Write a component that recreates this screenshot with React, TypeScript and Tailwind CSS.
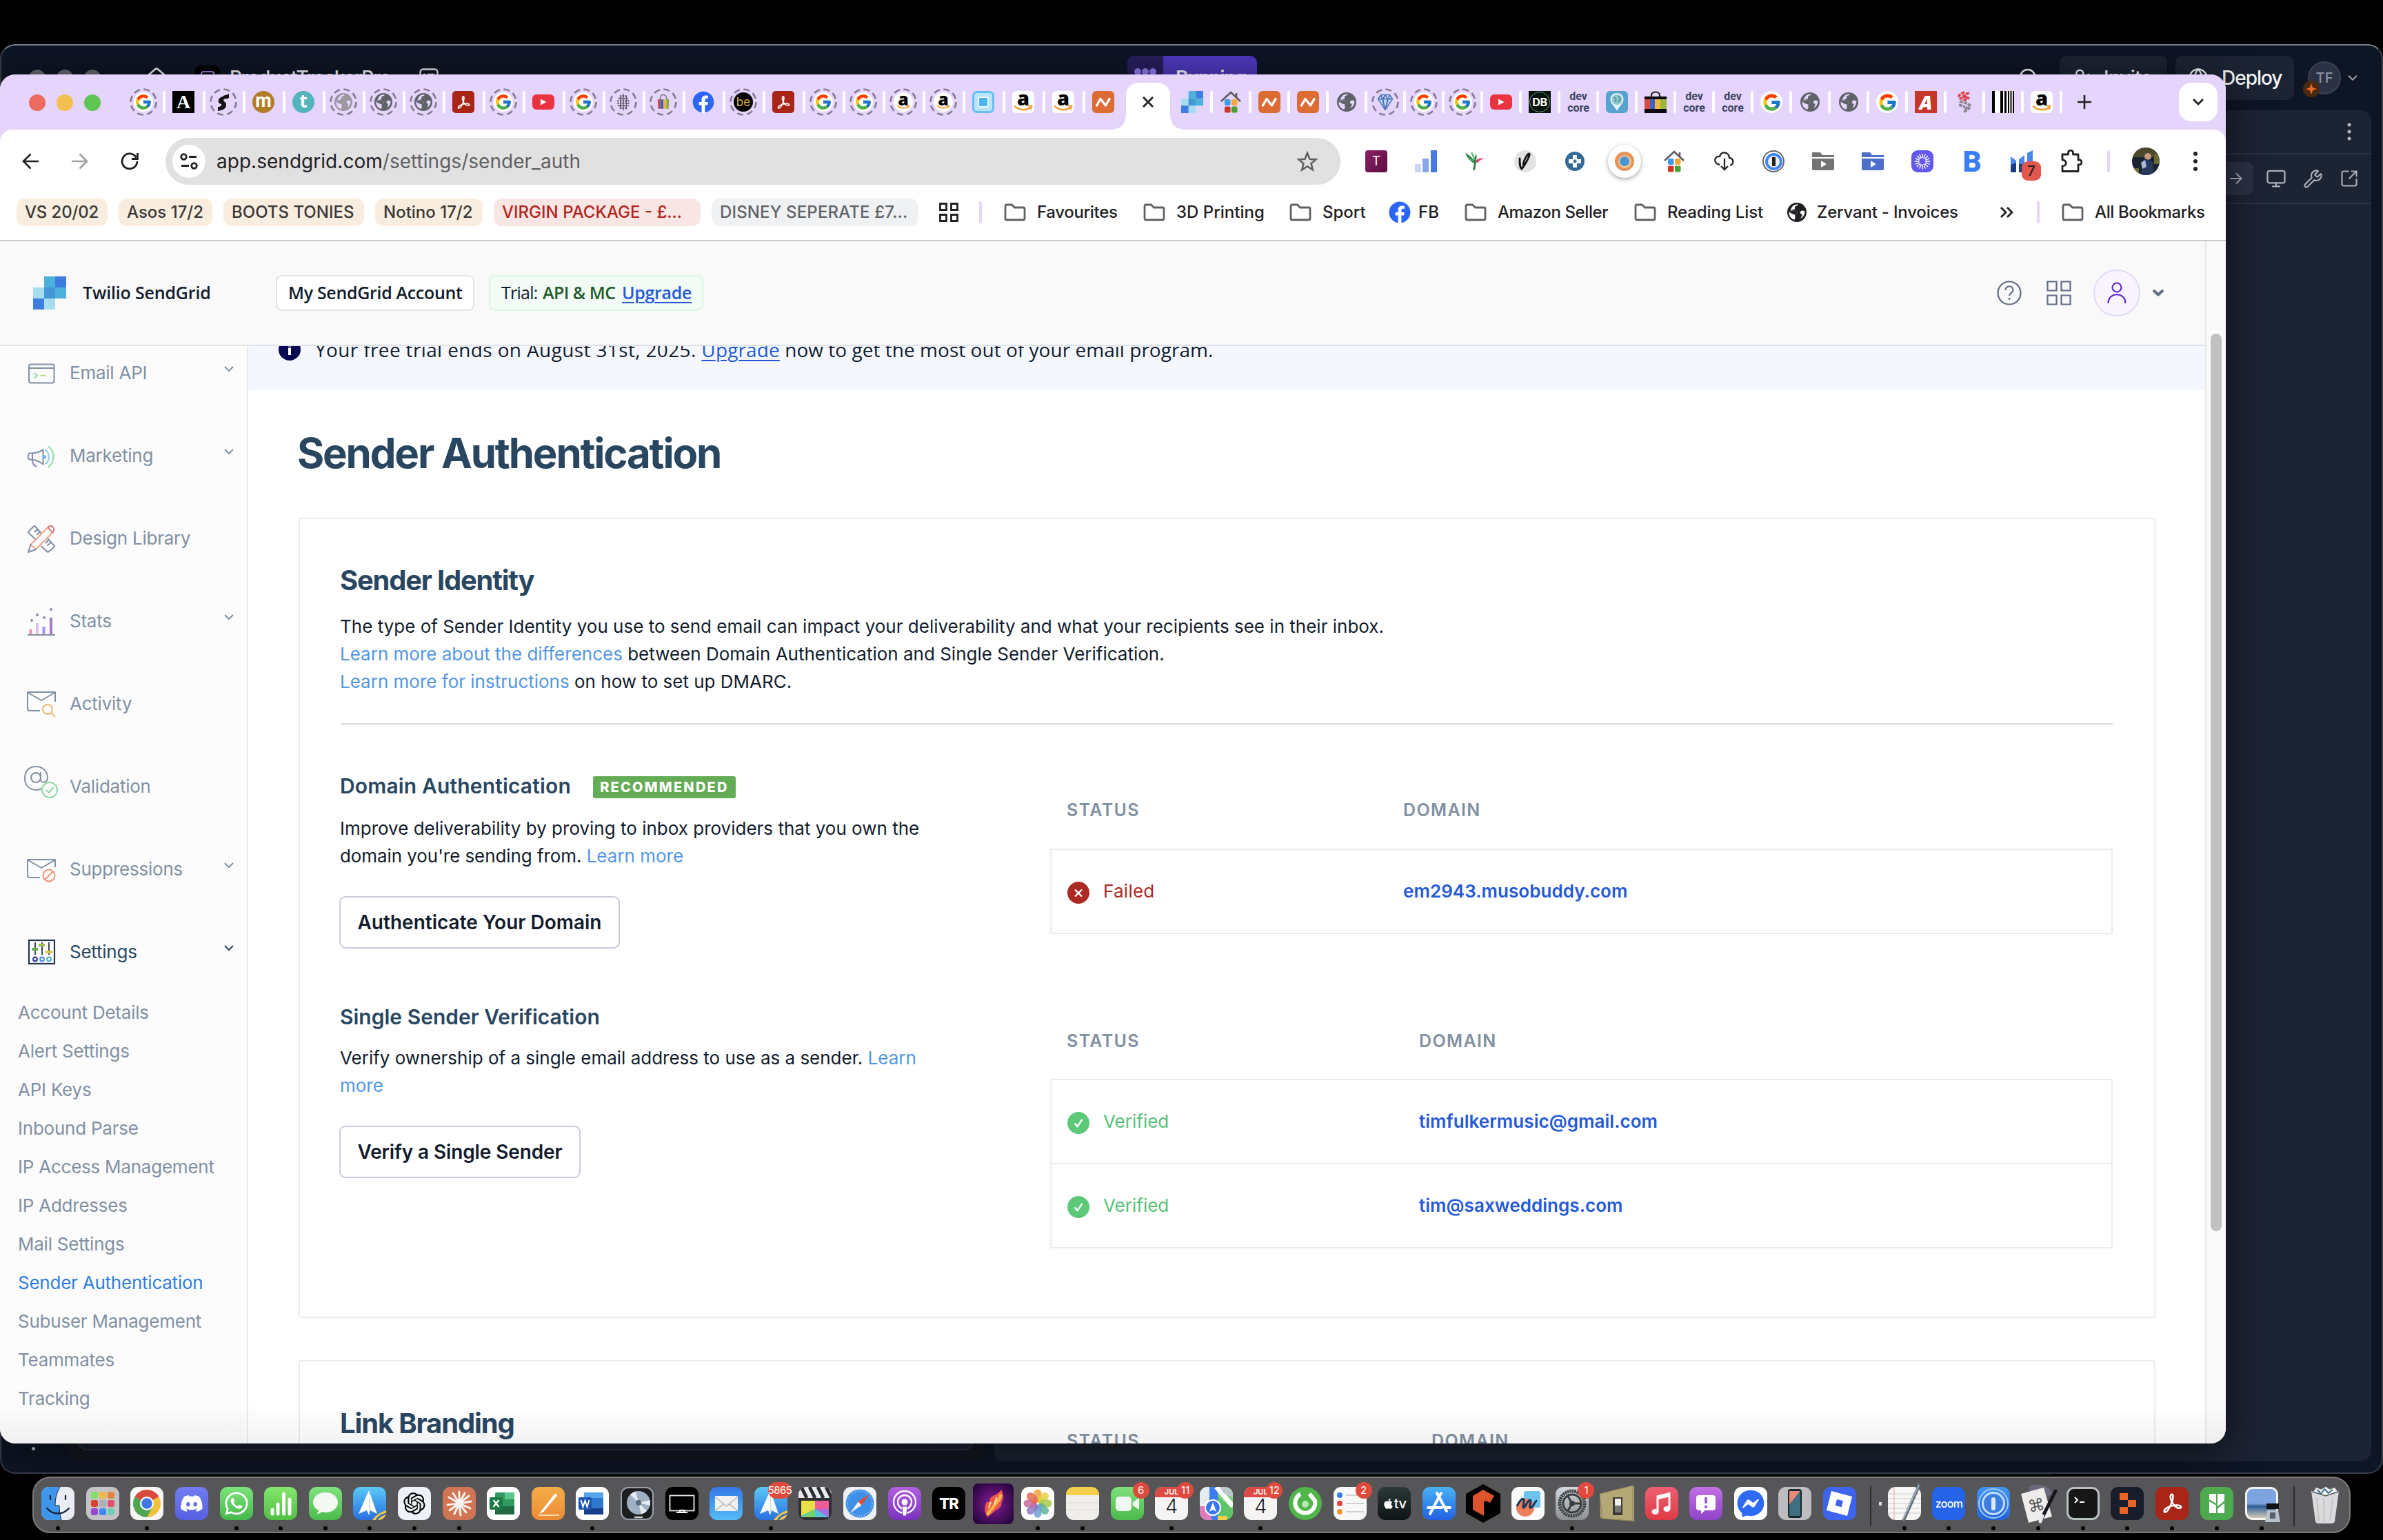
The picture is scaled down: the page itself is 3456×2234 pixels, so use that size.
import type { ReactNode } from 'react';
import { FcGoogle } from 'react-icons/fc';
import { FaApple, FaDiscord, FaFacebook, FaFacebookMessenger, FaWhatsapp } from 'react-icons/fa';
import { RiOpenaiFill } from 'react-icons/ri';
import { Monitor, Wrench, SquareArrowOutUpRight, Search, UserPlus, Globe, ChevronDown, House } from 'lucide-react';

type Kids = { children?: ReactNode; className?: string };

/* ---------- small building blocks ---------- */

function Pic({ vb = '0 0 32 32', className = 'size-8', children }: Kids & { vb?: string }) {
  return (
    <svg viewBox={vb} className={`shrink-0 ${className}`} fill="none">
      {children}
    </svg>
  );
}

function Ring({ children }: Kids) {
  return (
    <span className="relative grid size-10 place-items-center">
      <svg viewBox="0 0 40 40" className="absolute inset-0 size-10" fill="none">
        <circle cx="20" cy="20" r="18.5" stroke="#85798f" strokeWidth="2.6" strokeDasharray="9 5.5" />
      </svg>
      {children}
    </span>
  );
}

const G = () => (
  <span className="grid size-8 place-items-center rounded-full bg-white">
    <FcGoogle size={29} />
  </span>
);
const DashedG = () => (
  <Ring>
    <span className="grid size-7 place-items-center rounded-full bg-white">
      <FcGoogle size={26} />
    </span>
  </Ring>
);

function Earth({ color = '#5f6368', gap = '#e5d4fb', className = 'size-7' }: { color?: string; gap?: string; className?: string }) {
  return (
    <Pic vb="0 0 28 28" className={className}>
      <circle cx="14" cy="14" r="14" fill={color} />
      <path d="M16 2.600c-1 2.200-3.200 1.800-4.500 3-1.200 1.200.4 3-1 4-1.500 1-4 .4-5 2 2.500-.4 6-.3 8.200 1.700 2.200 2.200-.2 4.200-2.400 4.200-.3 2.700 1.500 5-1.300 7.300C5 23 2.300 19 2.600 13.500 6 12 4 9 8.500 4.500 10.500 3 13.500 2.300 16 2.600Z" fill={gap} />
      <path d="M5.500 11.600c2.500-.4 6-.3 8.200 1.700 2.200 2.200-.2 4.200-2.400 4.200-2.500-.3-6.300-2.500-8.700-4 1-.5 1.700-1.200 2.900-1.900Z" fill={color} />
      <path d="M25.300 12.500c-1.500-1-4.300-1.600-6 .4-1.200 1.600 0 3.500 1.700 3.700 1.400.2.300 3.400-2 6.400 3.700-1.700 6.500-5 6.300-10.500Z" fill={gap} />
    </Pic>
  );
}

function Acrobat({ className = 'size-8 rounded-[5px]' }: { className?: string }) {
  return (
    <span className={`grid shrink-0 place-items-center bg-[#a82518] ${className}`}>
      <svg viewBox="0 0 32 32" className="size-[90%]" fill="none" stroke="#fff" strokeWidth="1.9" strokeLinecap="round" strokeLinejoin="round">
        <path d="M15.500 6.500c-2 0-2 3.500-.8 6.500 1.700 4.200 5.300 8.400 8.600 8.400 2.800 0 2.700-2.800-.8-3.100-4.200-.4-9 .8-12.500 2.800-3.700 2.200-3.300 4.900-1.500 4.500 2.600-.6 5.800-7.300 7.200-11.500 1-3.100 1.500-7.600-.2-7.600Z" />
      </svg>
    </span>
  );
}

function YouTube() {
  return (
    <span className="grid h-[22px] w-8 place-items-center rounded-[6px] bg-[#eb3340]">
      <svg viewBox="0 0 10 10" className="size-[10px]"><path d="M1 0.500 9.500 5 1 9.500Z" fill="#fff" /></svg>
    </span>
  );
}

const Smile = ({ className }: { className: string }) => (
  <svg viewBox="0 0 32 10" className={`absolute ${className}`} fill="none" stroke="#f0a13a" strokeWidth="2.600" strokeLinecap="round">
    <path d="M4 2.500c7 6 17 6 23 1M24 1.500l4 .2-1 4" />
  </svg>
);

function AmazonTile() {
  return (
    <span className="relative grid size-8 justify-center rounded-[6px] bg-white">
      <span className="-mt-[10px] font-['Open_Sans'] text-[29px] leading-10 font-extrabold text-black">a</span>
      <Smile className="bottom-0.5 left-0 h-[10px] w-8" />
    </span>
  );
}
function AmazonRing() {
  return (
    <Ring>
      <span className="relative grid size-7 justify-center rounded-full bg-white">
        <span className="-mt-[8px] font-['Open_Sans'] text-[25px] leading-[34px] font-extrabold text-black">a</span>
        <Smile className="bottom-[3px] left-[3px] h-[7px] w-[22px]" />
      </span>
    </Ring>
  );
}

function Namecheap() {
  return (
    <span className="grid size-8 place-items-center rounded-[6px] bg-[#dc6b34]">
      <svg viewBox="0 0 32 32" className="size-8" fill="none" stroke="#fff" strokeWidth="3.400" strokeLinecap="round" strokeLinejoin="round">
        <path d="m6.500 21 5.500-9.500L19.500 21 25 11.500" />
      </svg>
    </span>
  );
}

function SendGridMark({ className = 'size-8' }: { className?: string }) {
  return (
    <Pic vb="0 0 3 3" className={className}>
      <path d="M0 1h1v1H0Z" fill="#a6def0" />
      <path d="M1 2h1v1H1Z" fill="#a6def0" />
      <path d="M0 2h1v1H0Z" fill="#3c7de0" />
      <path d="M1 1h1v1H1Z" fill="#4299d4" />
      <path d="M1 0h1v1H1Z" fill="#4eb1dc" />
      <path d="M2 1h1v1H2Z" fill="#4eb1dc" />
      <path d="M2 0h1v1H2Z" fill="#3c7de0" />
    </Pic>
  );
}

function HouseBlocks() {
  return (
    <Pic>
      <path d="M2 15 16 2l14 13M24 8.500V3" stroke="#5d5a60" strokeWidth="2.600" />
      <rect x="7" y="12" width="8.500" height="9" rx="2" fill="#3d9be6" />
      <rect x="17" y="12" width="8.500" height="9" rx="2" fill="#f4a63a" />
      <rect x="7" y="22.500" width="8.500" height="9" rx="2" fill="#cf3424" />
      <rect x="17" y="22.500" width="8.500" height="9" rx="2" fill="#4ba034" />
    </Pic>
  );
}

const DevCore = () => (
  <span className="grid justify-items-center font-['Roboto'] text-[16px] leading-[17px] font-bold text-[#3c4560]">
    <span>dev</span>
    <span>core</span>
  </span>
);

/* ---------- tab strip ---------- */

const leftTabs: ReactNode[] = [
  <DashedG />,
  <span className="grid size-8 place-items-center bg-black font-['Liberation_Serif'] text-[28px] leading-8 font-bold text-white">A</span>,
  <Ring>
    <Pic className="size-8"><path d="M15 8c3-3 5-1 9-4v6c-3 2-6 0-8 3 0 3 5 3 4 8-1 6-7 7-12 8v-6c4 0 6-2 5-4-3-1-5-2-4-6 1-3 3-4 6-5Z" fill="#111" /></Pic>
  </Ring>,
  <span className="grid size-8 place-items-center rounded-full bg-[#b27c28] font-['Roboto'] text-[27px] leading-7 font-bold text-white"><span className="-mt-1">m</span></span>,
  <span className="grid size-8 place-items-center rounded-full bg-[#54b4bd] font-['Open_Sans'] text-[27px] leading-7 font-bold text-white"><span className="-mt-1">t</span></span>,
  <Ring><Earth color="#9a979f" className="size-[26px]" /></Ring>,
  <Ring><Earth className="size-[26px]" /></Ring>,
  <Ring><Earth className="size-[26px]" /></Ring>,
  <Acrobat />,
  <DashedG />,
  <YouTube />,
  <DashedG />,
  <Ring>
    <Pic className="size-7">
      <path d="M10 6h12M8 10h16M6 14h20M6 18h20M7 22h18M10 26h12" stroke="#58545f" strokeWidth="2.400" strokeDasharray="3 1.200" />
      <path d="M16 2v28M11 6v22M21 6v22" stroke="#58545f" strokeWidth="1.500" />
    </Pic>
  </Ring>,
  <Ring>
    <Pic className="size-6">
      <path d="M10 12V8c0-8 12-8 12 0v4" stroke="#777" strokeWidth="2" />
      <path d="M5 11h5v18H6Z" fill="#d4453a" /><path d="M10 11h6v18h-6Z" fill="#3c62c4" /><path d="M16 11h6v18h-6Z" fill="#edb53c" /><path d="M22 11h5l-1 18h-4Z" fill="#78a83a" />
    </Pic>
  </Ring>,
  <span className="rounded-full bg-white text-[#2b66f6]"><FaFacebook size={32} /></span>,
  <Ring><span className="grid size-7 place-items-center rounded-full bg-black font-['Inter'] text-[17px] leading-6 text-[#e3b33c]">be</span></Ring>,
  <Acrobat />,
  <DashedG />,
  <DashedG />,
  <AmazonRing />,
  <AmazonRing />,
  <span className="grid size-8 place-items-center rounded-[7px] border-[3px] border-[#62c0f5] bg-[#b9e2fb]"><span className="size-4 rounded-[2px] border-2 border-[#ecf7fe] bg-[#4db4f2]" /></span>,
  <AmazonTile />,
  <AmazonTile />,
  <Namecheap />,
];

const rightTabs: ReactNode[] = [
  <SendGridMark />,
  <HouseBlocks />,
  <Namecheap />,
  <Namecheap />,
  <Earth />,
  <Ring>
    <Pic className="size-7"><path d="M9 4h14l5 7-12 18L4 11Zm-5 7h24M9 4l7 25 7-25M12 11l4-7 4 7-4 18Z" stroke="#4b74b8" strokeWidth="1.800" fill="#c5dcf6" strokeLinejoin="round" /></Pic>
  </Ring>,
  <DashedG />,
  <DashedG />,
  <YouTube />,
  <span className="grid size-8 place-items-center bg-[#08120c]"><span className="grid size-[30px] place-items-center rounded-full border border-[#5fa27a] font-['Inter'] text-[16px] leading-5 font-bold tracking-tight text-white">DB</span></span>,
  <DevCore />,
  <span className="grid size-8 place-items-center rounded-[6px] bg-[#56a3cf]">
    <Pic><path d="M16 3c6 0 9.500 4 9.500 9 0 7-6.500 10-9.500 17-3-7-9.500-10-9.500-17 0-5 3.500-9 9.500-9Z" fill="#e4f2f5" /><circle cx="16" cy="12.500" r="7.500" fill="#8fc6cc" /><path d="M12 9l3 3-2 4M18 7l3 4-3 5" stroke="#3f8c94" strokeWidth="1.500" /></Pic>
  </span>,
  <Pic>
    <path d="M10 9V6c0-6 12-6 12 0v3" stroke="#222" strokeWidth="2.200" />
    <path d="M0 8h32v24H0Z" fill="#0a0a0a" />
    <path d="M0 12h8v14H0Z" fill="#dc4b3f" /><path d="M8 12h7v14H8Z" fill="#3b62c8" /><path d="M15 12h8v14h-8Z" fill="#efb73e" /><path d="M23 12h9v14h-9Z" fill="#9ab83e" />
  </Pic>,
  <DevCore />,
  <DevCore />,
  <G />,
  <Earth />,
  <Earth />,
  <G />,
  <span className="grid size-8 place-items-center bg-[#c63629] font-['Open_Sans'] text-[28px] leading-8 font-extrabold text-white italic">A</span>,
  <Pic>
    <path d="M16 2C9 4 6 8 9 10l11 4M13 7l10 4M23 3c-6 1-9 4-4 6" stroke="#d9414c" strokeWidth="3.600" strokeDasharray="5 1.200" />
    <path d="M9 15l11 3c5 2 2 6-5 8M8 20l9 3M15 30c8-3 10-7 8-11" stroke="#8b8594" strokeWidth="3.600" strokeDasharray="5 1.200" />
  </Pic>,
  <Pic>
    <path d="M0 0h32v32H0Z" fill="#fff" />
    <path d="M0 0h4v32H0ZM12 0h4v32h-4ZM18 0h3v32h-3ZM23 0h2v32h-2ZM26.500 0h2v32h-2ZM30 0h2v32h-2Z" fill="#000" />
  </Pic>,
  <AmazonTile />,
];

function TabStrip() {
  return (
    <div className="flex h-20 items-start bg-[#e5d4fb]">
      <div className="flex h-20 w-[179px] items-center gap-4 pt-[2px] pl-[42px]">
        <span className="size-6 rounded-full bg-[#ec6a5e]" />
        <span className="size-6 rounded-full bg-[#f4bf4f]" />
        <span className="size-6 rounded-full bg-[#61c554]" />
      </div>
      {leftTabs.map((icon, i) => (
        <div key={i} className="relative grid h-20 w-[58px] shrink-0 place-items-center">
          {icon}
          {i < leftTabs.length - 1 && <span className="absolute top-6 -right-[3px] h-8 w-1 rounded-full bg-white" />}
        </div>
      ))}
      <div className="relative h-20 w-[72px] shrink-0 px-1 pt-3">
        <div className="grid h-[68px] place-items-center rounded-t-[18px] bg-white pb-3">
          <svg viewBox="0 0 16 16" className="size-4" stroke="#1f2023" strokeWidth="2.800"><path d="m1 1 14 14M15 1 1 15" /></svg>
        </div>
        <svg viewBox="0 0 22 22" className="absolute bottom-0 -left-[18px] size-[22px]" fill="#fff"><path d="M22 22V0C22 14 14 22 0 22Z" /></svg>
        <svg viewBox="0 0 22 22" className="absolute -right-[18px] bottom-0 size-[22px]" fill="#fff"><path d="M0 22V0c0 14 8 22 22 22Z" /></svg>
      </div>
      {rightTabs.map((icon, i) => (
        <div key={i} className="relative grid h-20 w-14 shrink-0 place-items-center">
          {icon}
          <span className="absolute top-6 -right-[2px] h-8 w-1 rounded-full bg-white" />
        </div>
      ))}
      <div className="grid h-20 w-[68px] place-items-center">
        <svg viewBox="0 0 20 20" className="size-5" stroke="#1f2023" strokeWidth="2.600"><path d="M10 0v20M0 10h20" /></svg>
      </div>
      <div className="mt-3 ml-auto mr-3 grid h-14 w-14 place-items-center rounded-[18px] bg-white">
        <svg viewBox="0 0 16 10" className="h-[10px] w-4" fill="none" stroke="#1f2023" strokeWidth="2.800"><path d="m1 1 7 7 7-7" /></svg>
      </div>
    </div>
  );
}

/* ---------- toolbar ---------- */

const extensions: ReactNode[] = [
  <span className="grid size-8 place-items-center rounded-[4px] bg-linear-to-br from-[#8d2064] to-[#5b0d40] font-['Inter'] text-[19px] leading-6 text-white">T</span>,
  <Pic><path d="M0 20h9v12H0Z" fill="#c9d7f4" /><path d="M11 12h9v20h-9Z" fill="#86a6e8" /><path d="M23 0h9v32h-9Z" fill="#4679e2" /></Pic>,
  <Pic><path d="M1 4c5 2 9 6 12 10l4-9c1 4 0 8 0 12l-2 12-3-1 2-9C8 16 4 11 1 4Z" fill="#2f7d46" /><path d="M10 3l5 11M6 12l7 4" stroke="#52b766" strokeWidth="2" /><path d="M16 17c2-6 8-6 15-4-5-1-9 1-12 5Z" fill="#df3f72" /></Pic>,
  <span className="grid size-8 place-items-center rounded-full bg-[#e2e2e2]"><Pic className="size-8"><path d="M8 12c0 8 0 13 3 15 5-6 13-21 11-22s-8 8-9 16" stroke="#111" strokeWidth="2.800" strokeLinecap="round" /></Pic></span>,
  <span className="grid size-7 place-items-center rounded-full bg-[#356a96]"><svg viewBox="0 0 20 20" className="size-5"><path d="M7 1h6v6h6v6h-6v6H7v-6H1V7h6Z" fill="#fff" /><path d="M10 7l3 3-3 3-3-3Z" fill="#356a96" /></svg></span>,
  <span className="grid size-12 place-items-center rounded-full bg-white shadow-[0_2px_6px_rgba(0,0,0,0.35)]"><span className="grid size-7 place-items-center rounded-full bg-[#e5955a]"><span className="grid size-[19px] place-items-center rounded-full bg-[#f5c493]"><span className="size-[14px] rounded-full bg-[#4797d8]" /></span></span></span>,
  <HouseBlocks />,
  <Pic><path d="M10 21c-10-2-8-13 0-12 3-9 14-6 14 2 7 1 7 9 1 11M17 12v16m-5-5 5 5 5-5" stroke="#222" strokeWidth="2.300" /></Pic>,
  <span className="grid size-8 place-items-center rounded-full border-2 border-[#666]"><span className="grid size-[25px] place-items-center rounded-full border-4 border-[#3f86f5] bg-[#eee]"><span className="h-[13px] w-[5px] bg-[#222]" /></span></span>,
  <Pic><path d="M0 3h12l3 4h17v3H0ZM0 12h32v15q0 2-2 2H2q-2 0-2-2Z" fill="#737373" /><path d="m13 15 8 5-8 5Z" fill="#fff" /></Pic>,
  <Pic><path d="M0 3h12l3 4h17v3H0ZM0 12h32v15q0 2-2 2H2q-2 0-2-2Z" fill="#4b6fcb" /><path d="m13 15 8 5-8 5Z" fill="#fff" /></Pic>,
  <span className="grid size-8 place-items-center rounded-[9px] bg-[#6258ec]"><Pic className="size-7"><path d="M16 3v8M16 21v8M3 16h8M21 16h8M6.800 6.800l5.600 5.600M19.600 19.600l5.600 5.600M25.200 6.800l-5.600 5.600M12.400 19.600l-5.600 5.600M11 4l3 7M18 21l3 7M21 4l-3 7M14 21l-3 7M4 11l7 3M21 18l7 3M28 11l-7 3M11 18l-7 3" stroke="#fff" strokeWidth="1.600" /></Pic></span>,
  <span className="font-['Roboto'] text-[42px] leading-[50px] font-black text-[#3c7df2]">B</span>,
  <span className="relative">
    <Pic><path d="M0 9l8 6v7H0ZM12 13l8-6v15h-8ZM24 4l8-4v22h-8Z" fill="#4b86ee" /><path d="M0 21l8-3v14H0ZM12 20h8v12h-8Z" fill="#1c3d80" /></Pic>
    <span className="absolute top-4 left-4 grid h-7 w-7 place-items-center rounded-[9px] bg-[#e2574b] font-['Inter'] text-[20px] leading-6 font-medium text-[#222]">7</span>
  </span>,
  <Pic vb="0 0 32 34" className="h-[34px] w-8"><path d="M3 7h8.500V4.500a3.500 3.500 0 0 1 7 0V7H26v8h1.500a3.500 3.500 0 0 1 0 7H26v9.500H3V24c7 0 7-9 0-9Z" stroke="#1f2023" strokeWidth="2.800" strokeLinejoin="round" /></Pic>,
];

function Toolbar() {
  return (
    <div className="flex h-[92px] items-center bg-[#e5d4fb]">
      <div className="flex h-[92px] w-full items-center rounded-t-[18px] bg-white">
        <svg viewBox="0 0 24 24" className="ml-8 size-6" fill="none" stroke="#1f2023" strokeWidth="2.700"><path d="M24 12H2M12.500 1.500 2 12l10.500 10.500" /></svg>
        <svg viewBox="0 0 24 24" className="ml-12 size-6" fill="none" stroke="#a0a0a0" strokeWidth="2.700"><path d="M0 12h22M11.500 1.500 22 12 11.500 22.500" /></svg>
        <svg viewBox="0 0 26 26" className="ml-[47px] size-[26px]" fill="none" stroke="#1f2023" strokeWidth="2.800"><path d="M22.600 7.500a11 11 0 1 0 1.400 5.500M24.500 1v8.500H16" /></svg>
        <div className="ml-[39px] flex h-[68px] w-[1704px] shrink-0 items-center rounded-full bg-[#e1e1e1] pl-[10px]">
          <span className="grid size-12 place-items-center rounded-full bg-white">
            <svg viewBox="0 0 26 24" className="h-6 w-[26px]" fill="none" stroke="#1f2023" strokeWidth="2.800"><circle cx="5.500" cy="5.500" r="3.800" /><path d="M13 5.500h11M2 18.500h11" /><circle cx="20.500" cy="18.500" r="3.800" /></svg>
          </span>
          <span className="ml-4 font-['Inter'] text-[28px] tracking-[0.001em] text-[#1f2023]">
            app.sendgrid.com<span className="text-[#5f6063]">/settings/sender_auth</span>
          </span>
          <svg viewBox="0 0 32 32" className="mr-8 ml-auto size-8" fill="none" stroke="#5f6063" strokeWidth="2.600"><path d="m16 4 3.500 8.800 9 .6-7 5.900 2.300 9L16 23.200l-7.800 5.100 2.300-9-7-5.900 9-.6Z" /></svg>
        </div>
        <div className="ml-4 flex items-center">
          {extensions.map((icon, i) => (
            <span key={i} className="grid h-12 w-[72px] shrink-0 place-items-center">{icon}</span>
          ))}
        </div>
        <span className="ml-4 h-8 w-1 shrink-0 rounded-full bg-[#e5d4fb]" />
        <svg viewBox="0 0 40 40" className="ml-8 size-10 shrink-0">
          <clipPath id="face"><circle cx="20" cy="20" r="20" /></clipPath>
          <g clipPath="url(#face)">
            <path d="M0 0h40v40H0Z" fill="#1b2330" /><path d="M0 0h40v14H0Z" fill="#4c4a2c" /><path d="M0 30h10v10H0ZM32 10h8v14h-8Z" fill="#6b6a35" />
            <circle cx="23" cy="13" r="5" fill="#c99a80" /><path d="M13 40l3-22 6-1 8 4 2 19Z" fill="#27395c" /><path d="M13 22l6-4 2 10-6 3Z" fill="#a9b9d2" />
          </g>
        </svg>
        <svg viewBox="0 0 6 28" className="ml-[49px] h-7 w-[6px] shrink-0" fill="#1f2023"><circle cx="3" cy="3" r="3" /><circle cx="3" cy="14" r="3" /><circle cx="3" cy="25" r="3" /></svg>
      </div>
    </div>
  );
}

/* ---------- bookmarks ---------- */

function Chip({ children, className = '' }: Kids) {
  return <span className={`flex h-10 shrink-0 items-center overflow-hidden rounded-[12px] pl-3 ${className}`}>{children}</span>;
}

const FolderIcon = () => (
  <Pic vb="0 0 32 26" className="h-[26px] w-8"><path d="M2 4.500C2 3 2.500 2 4 2h7.500l4 4H28c1.500 0 2 1 2 2v13.500c0 1.500-.5 2.500-2 2.500H4c-1.500 0-2-1-2-2.500Z" stroke="#5f6063" strokeWidth="2.800" /></Pic>
);

function Mark({ icon, children, className = '' }: Kids & { icon: ReactNode }) {
  return (
    <span className={`flex shrink-0 items-center gap-4 ${className}`}>
      {icon}
      <span>{children}</span>
    </span>
  );
}

function Bookmarks() {
  return (
    <div className="flex h-[70px] shrink-0 items-center border-b-2 border-[#c9c9c9] bg-white pb-[13px] pl-6 font-['Inter'] text-[24px] font-medium whitespace-nowrap text-[#1f2023]">
      <div className="flex gap-4">
        <Chip className="w-[132px] bg-[#f9ede0] tracking-[-0.006em] text-[#3a3836]">VS 20/02</Chip>
        <Chip className="w-[136px] bg-[#f9ede0] text-[#3a3836]">Asos 17/2</Chip>
        <Chip className="w-[204px] bg-[#f9ede0] text-[#3a3836]">BOOTS TONIES</Chip>
        <Chip className="w-[156px] bg-[#f9ede0] text-[#3a3836]">Notino 17/2</Chip>
        <Chip className="w-[300px] bg-[#f8e6e4] text-[#b3261e]">VIRGIN PACKAGE - £...</Chip>
        <Chip className="w-[300px] bg-[#f0f1f3] tracking-[0.006em] text-[#5f6368]">DISNEY SEPERATE £7...</Chip>
      </div>
      <svg viewBox="0 0 28 28" className="ml-[30px] size-7" fill="none" stroke="#1f2023" strokeWidth="2.800"><path d="M1.500 1.500h9v9h-9ZM17.500 1.500h9v9h-9ZM1.500 17.500h9v9h-9ZM17.500 17.500h9v9h-9Z" /></svg>
      <span className="ml-[30px] h-8 w-1 rounded-full bg-[#e5d4fb]" />
      <Mark icon={<FolderIcon />} className="ml-8 w-[202px] tracking-[-0.013em]">Favourites</Mark>
      <Mark icon={<FolderIcon />} className="w-[212px]">3D Printing</Mark>
      <Mark icon={<FolderIcon />} className="w-[144px]">Sport</Mark>
      <span className="flex w-[110px] items-center gap-[11px]"><FaFacebook size={32} color="#2b66f6" />FB</span>
      <Mark icon={<FolderIcon />} className="w-[246px] tracking-[-0.017em]">Amazon Seller</Mark>
      <Mark icon={<FolderIcon />} className="w-[222px] tracking-[-0.005em]">Reading List</Mark>
      <Mark icon={<Earth color="#1f2023" gap="#fff" />} className="w-[308px] gap-[15px] tracking-[-0.008em]">Zervant - Invoices</Mark>
      <svg viewBox="0 0 20 16" className="h-4 w-5" fill="none" stroke="#1f2023" strokeWidth="2.800"><path d="m2 1 7 7-7 7M11 1l7 7-7 7" /></svg>
      <span className="ml-[34px] h-8 w-1 rounded-full bg-[#e5d4fb]" />
      <Mark icon={<FolderIcon />} className="ml-8 tracking-[-0.016em]">All Bookmarks</Mark>
    </div>
  );
}

/* ---------- SendGrid header ---------- */

function AppHeader() {
  return (
    <header className="flex h-[152px] shrink-0 items-center border-b-2 border-[#e1e3ea] bg-[#f9f9f9] pl-12 font-['Open_Sans'] text-[25px] font-semibold whitespace-nowrap text-[#121c2d]">
      <SendGridMark className="size-12" />
      <span className="ml-[24px] w-[280px] tracking-[-0.007em]">Twilio SendGrid</span>
      <span className="flex h-[52px] w-72 items-center rounded-[9px] border-2 border-[#e1e3ea] bg-white pl-4 tracking-[-0.013em]">My SendGrid Account</span>
      <span className="ml-[21px] flex h-[52px] w-[311px] items-center rounded-[9px] border-2 border-[#d9f6e1] bg-[#f2fbf5] pl-4">
        <span className="w-[60px] font-normal tracking-[-0.03em]">Trial:</span>
        <span className="w-[115px] tracking-[-0.022em] text-[#1f5b2c]">API &amp; MC</span>
        <span className="tracking-[-0.012em] text-[#2459d8] underline decoration-2 underline-offset-4">Upgrade</span>
      </span>
      <div className="mr-[59px] ml-auto flex items-center text-[#606b85]">
        <svg viewBox="0 0 36 36" className="size-9" fill="none" stroke="currentColor" strokeWidth="2.200"><circle cx="18" cy="18" r="16.500" /><path d="M12.500 14c0-7.500 11-7.500 11 0 0 4-5.500 3.700-5.500 8" /><circle cx="18" cy="26.500" r="1.300" fill="currentColor" strokeWidth="0.500" /></svg>
        <svg viewBox="0 0 36 36" className="ml-9 size-9" fill="none" stroke="currentColor" strokeWidth="2.200"><path d="M1.500 1.500h13v13h-13ZM21.500 1.500h13v13h-13ZM1.500 21.500h13v13h-13ZM21.500 21.500h13v13h-13Z" /></svg>
        <span className="ml-8 grid size-[68px] place-items-center rounded-full border-2 border-[#e3d8f8] bg-[#f9f5ff]">
          <svg viewBox="0 0 28 32" className="h-8 w-7" fill="none" stroke="#6329cf" strokeWidth="2.200"><circle cx="14" cy="8" r="6.500" /><path d="M1.500 31c0-17 25-17 25 0" /></svg>
        </span>
        <svg viewBox="0 0 18 12" className="ml-[17px] h-3 w-[18px]" fill="none" stroke="currentColor" strokeWidth="4" strokeLinecap="round" strokeLinejoin="round"><path d="m3 3 6 5.500L15 3" /></svg>
      </div>
    </header>
  );
}

/* ---------- sidebar ---------- */

const navIcons: Record<string, ReactNode> = {
  'Email API': (
    <g stroke="#8190a3" strokeWidth="2">
      <rect x="6" y="12.500" width="36.500" height="27" rx="3" /><path d="M6 18h36" /><path d="m13.500 24.700 4.500 4-4.500 4" stroke="#8fdba6" /><path d="M22.500 28.700h8" stroke="#bcd489" />
    </g>
  ),
  Marketing: (
    <g stroke="#8190a3" strokeWidth="2" strokeLinecap="round">
      <path d="M11 22v10c0 4 2 7 5.500 8.700" stroke="#8582c9" /><path d="M8 21.500h3c6 0 10-2 15.500-5v21c-5-4-9-6-15.500-6.800H8c-4.500 0-4.500-9.200 0-9.200Z" /><circle cx="28.500" cy="27" r="2.800" fill="#7db4f5" stroke="none" /><path d="M30 17c6.500 5 6.500 15 0 20" stroke="#84cde8" /><path d="M34.300 11.500c9.500 8 9.500 22 0 30" stroke="#8fdba6" />
    </g>
  ),
  'Design Library': (
    <g stroke="#8190a3" strokeWidth="2" strokeLinejoin="round" strokeLinecap="round">
      <path d="m24 18-9-10.500q-1-1-2 0L5.500 15q-1 1 0 2L16 27M24 36.500l8 7.500q1.500 1.500 3 0l7.500-6.500q1-1 0-2L33 25M14.500 15.500l4-3.500M18 19l4-3.500M18 11.500l-3 4M30 31.500l4-3.500M33 35l4-3.500" />
      <path d="m8.500 34 25-25M40 16.700 16 41M8.500 34l7.500 7" stroke="#f3a488" /><path d="M33.500 9c3.500-5 11.500.5 7.500 6.500l-1 1.200Z" stroke="#d47c78" /><path d="M8.500 34 5 45l11-4M5 45" />
    </g>
  ),
  Stats: (
    <g strokeWidth="4">
      <path d="M8.500 45v-8" stroke="#ef8fae" /><path d="M18 45V28" stroke="#dfc1ea" /><path d="M27.500 45V33" stroke="#a597ee" /><path d="M38 45V20" stroke="#a877c6" /><path d="M4 45h40" stroke="#8190a3" strokeWidth="2" />
      <g fill="#8190a3"><circle cx="10" cy="24" r="2" /><circle cx="18" cy="16" r="2" /><circle cx="28" cy="20" r="2" /><circle cx="38" cy="8" r="2" /></g>
    </g>
  ),
  Activity: (
    <g stroke="#8190a3" strokeWidth="2" strokeLinejoin="round">
      <path d="M22 35H7c-2 0-3-1-3-3V8h40v14" /><path d="m5 9 19 11L43 9" /><circle cx="33" cy="33" r="7" stroke="#f1b76e" /><path d="m38 38 6 6" stroke="#f1b76e" />
    </g>
  ),
  Validation: (
    <g stroke="#8190a3" strokeWidth="2">
      <circle cx="16" cy="12" r="7" /><path d="M23 4v11c0 6 10 5 10-3 0-9-7-16-17-16S0 3 0 13s6 16 16 17c4 0 6-1 8-2" /><circle cx="36" cy="30" r="11" stroke="#8fd8a2" /><path d="m31 30 4 4 7-8" stroke="#8fd8a2" />
    </g>
  ),
  Suppressions: (
    <g stroke="#8190a3" strokeWidth="2" strokeLinejoin="round">
      <path d="M22 37H7c-2 0-3-1-3-3V11h40v11" /><path d="m5 12 19 11 19-11" /><g stroke="#ec9478"><circle cx="35" cy="34" r="8.500" /><path d="m29 40 12-12" /></g>
    </g>
  ),
  Settings: (
    <g strokeWidth="2.200">
      <rect x="6" y="8" width="37" height="34" stroke="#25364f" /><path d="M15 11v18M25 11v18M35 11v18" stroke="#25364f" strokeWidth="1.800" /><path d="M10 21h9" stroke="#62b04a" strokeWidth="4" /><path d="M20 15h9" stroke="#9cc34d" strokeWidth="4" /><path d="M30 25h10" stroke="#d3c83c" strokeWidth="4" />
      <circle cx="15" cy="35.500" r="2.800" stroke="#333a9c" /><circle cx="25" cy="35.500" r="2.800" stroke="#4a8fe0" /><circle cx="35" cy="35.500" r="2.800" stroke="#4fb5c4" />
    </g>
  ),
};

const nav: [string, boolean][] = [
  ['Email API', true], ['Marketing', true], ['Design Library', false], ['Stats', true],
  ['Activity', false], ['Validation', false], ['Suppressions', true], ['Settings', true],
];
const subNav = ['Account Details', 'Alert Settings', 'API Keys', 'Inbound Parse', 'IP Access Management', 'IP Addresses', 'Mail Settings', 'Sender Authentication', 'Subuser Management', 'Teammates', 'Tracking'];

function Sidebar() {
  return (
    <aside className="h-full w-[360px] shrink-0 overflow-hidden border-r-2 border-[#e9eaec] bg-[#fcfcfc] font-['Inter'] text-[26px] tracking-[-0.009em] text-[#8190a3]">
      <nav className="-mt-[22px]">
        {nav.map(([label, open]) => (
          <a key={label} className={`flex h-[120px] items-center pr-[19px] pl-9 ${label === 'Settings' ? 'text-[#294661]' : ''}`}>
            <Pic vb="0 0 48 48" className="size-12 overflow-visible">{navIcons[label]}</Pic>
            <span className="ml-[17px]">{label}</span>
            {open && (
              <svg viewBox="0 0 14 9" className="mb-[9px] ml-auto h-[9px] w-[14px]" fill="none" stroke="currentColor" strokeWidth="2"><path d="m1 1 6 6 6-6" /></svg>
            )}
          </a>
        ))}
        {subNav.map((label) => (
          <a key={label} className={`flex h-14 items-center pl-[26px] ${label === 'Sender Authentication' ? 'text-[#2f7de1]' : ''}`}>{label}</a>
        ))}
      </nav>
    </aside>
  );
}

/* ---------- main content ---------- */

const Link = ({ children }: Kids) => <a className="text-[#5396e2]">{children}</a>;

function Status({ ok }: { ok: boolean }) {
  return (
    <span className={`flex items-center gap-5 ${ok ? 'text-[#57c276]' : 'tracking-[0.01em] text-[#ab2a22]'}`}>
      <svg viewBox="0 0 32 32" className="mt-1 size-8" fill="none">
        <circle cx="16" cy="16" r="16" fill={ok ? '#5cc878' : '#ab2a22'} />
        <path d={ok ? 'm10.500 16.500 4 4.500 7-10' : 'm11 11.500 10 10m0-10-10 10'} stroke="#fff" strokeWidth="2.400" />
      </svg>
      {ok ? 'Verified' : 'Failed'}
    </span>
  );
}

function Heads({ className }: { className: string }) {
  return (
    <div className="flex h-[30px] items-center pl-6 text-[25px] leading-[30px] font-semibold tracking-[0.055em] text-[#8190a3]">
      <span className={`shrink-0 ${className}`}>STATUS</span>
      <span>DOMAIN</span>
    </div>
  );
}

function Rows({ rows, ok, className }: { rows: string[]; ok: boolean; className: string }) {
  return (
    <div className="divide-y-2 divide-[#e9ebee] border-2 border-[#e9ebee]">
      {rows.map((r) => (
        <div key={r} className="box-content flex h-[120px] items-center pl-[23px]">
          <span className={`shrink-0 ${className}`}><Status ok={ok} /></span>
          <a className="font-semibold tracking-[0.002em] text-[#2459d8]">{r}</a>
        </div>
      ))}
    </div>
  );
}

const Btn = ({ children, className }: Kids) => (
  <button className={`-ml-px flex h-[76px] items-center justify-center rounded-[9px] border-2 border-[#caccd9] bg-white text-[28px] font-semibold text-[#121c2d] ${className}`}>{children}</button>
);

function Content() {
  return (
    <main className="h-full min-w-0 flex-1 overflow-hidden bg-white font-['Inter'] text-[26px] leading-10 text-[#121c2d]">
      <div className="flex h-16 items-start overflow-hidden bg-[#f4f8fe] pl-11 font-['Open_Sans'] text-[28px] whitespace-nowrap">
        <svg viewBox="0 0 32 32" className="-mt-[11px] size-8"><circle cx="16" cy="16" r="16" fill="#06094f" /><path d="M14 13.500h4V24h-4ZM14 7.500h4v4h-4Z" fill="#fff" /></svg>
        <p className="-mt-[15px] ml-[21px]">
          <span className="tracking-[0.0130em]">Your free trial ends on August 31st, 2025. </span>
          <a className="tracking-[0.005em] text-[#2459d8] underline decoration-2 underline-offset-4">Upgrade</a>
          <span className="tracking-[0.001em]"> now to get the most out of your email program.</span>
        </p>
      </div>
      <div className="pr-[72px] pl-[73px]">
        <h1 className="mt-[55px] -ml-[2px] h-[72px] text-[60px] leading-[72px] font-bold tracking-[-0.0369em] text-[#294661]">Sender Authentication</h1>
        <section className="mt-[58px] h-[1161px] rounded-[4px] border-2 border-[#e9ebee] pr-[60px] pl-[58px]">
          <h2 className="mt-[65px] h-12 text-[40px] leading-[48px] font-bold tracking-[-0.031em] text-[#294661]">Sender Identity</h2>
          <p className="mt-[23px]">
            The type of Sender Identity you use to send email can impact your deliverability and what your recipients see in their inbox.
            <br />
            <Link>Learn more about the differences</Link> between Domain Authentication and Single Sender Verification.
            <br />
            <Link>Learn more for instructions</Link> on how to set up DMARC.
          </p>
          <hr className="mt-10 ml-px border-t-2 border-[#d5d8dc]" />
          <div className="flex h-[406px] pt-[71px]">
            <div className="w-[1030px] shrink-0">
              <h3 className="flex h-9 items-center text-[30px] leading-9 font-semibold tracking-[0.005em] text-[#294661]">
                Domain Authentication
                <span className="mt-1 ml-8 flex h-8 w-[207px] items-center justify-center rounded-[3px] bg-[#64ac55] text-[20px] leading-8 font-extrabold tracking-[0.111em] text-white">RECOMMENDED</span>
              </h3>
              <p className="mt-6">
                Improve deliverability by proving to inbox providers that you own the
                <br />
                <span className="tracking-[-0.003em]">domain you're sending from.</span> <Link>Learn more</Link>
              </p>
              <Btn className="mt-[38px] w-[407px]">Authenticate Your Domain</Btn>
            </div>
            <div className="flex-1 pt-[38px]">
              <Heads className="w-[488px]" />
              <div className="mt-[41px]"><Rows ok={false} rows={['em2943.musobuddy.com']} className="w-[487px]" /></div>
            </div>
          </div>
          <div className="flex">
            <div className="w-[1030px] shrink-0">
              <h3 className="h-9 text-[30px] leading-9 font-semibold text-[#294661]">Single Sender Verification</h3>
              <p className="mt-[22px]">
                <span className="tracking-[-0.0005em]">Verify ownership of a single email address to use as a sender.</span> <Link>Learn</Link>
                <br />
                <Link>more</Link>
              </p>
              <Btn className="mt-[38px] w-[350px] tracking-[-0.0045em]">Verify a Single Sender</Btn>
            </div>
            <div className="flex-1 pt-[38px]">
              <Heads className="w-[511px]" />
              <div className="mt-10"><Rows ok rows={['timfulkermusic@gmail.com', 'tim@saxweddings.com']} className="w-[510px]" /></div>
            </div>
          </div>
        </section>
        <section className="mt-[61px] flex h-[300px] rounded-[4px] border-2 border-[#e9ebee] pt-[66px] pr-[60px] pl-[58px]">
          <h2 className="h-12 w-[1030px] shrink-0 text-[40px] leading-[48px] font-bold tracking-[-0.029em] text-[#294661]">Link Branding</h2>
          <div className="flex-1 pt-[34px]"><Heads className="w-[529px]" /></div>
        </section>
      </div>
    </main>
  );
}

/* ---------- editor window behind the browser ---------- */

function EditorWindow() {
  return (
    <div className="absolute top-16 left-0 flex h-[2074px] w-[3456px] flex-col overflow-hidden rounded-[22px] border-2 border-[#3b3f4b] border-t-[#7d808a] bg-[#0e1525] font-['Inter'] text-[#f5f9fc]">
      <div className="flex h-[94px] shrink-0 items-center text-[28px] font-medium">
        <div className="ml-10 flex gap-4">
          <span className="size-6 rounded-full bg-[#6b6c74]" /><span className="size-6 rounded-full bg-[#6b6c74]" /><span className="size-6 rounded-full bg-[#6b6c74]" />
        </div>
        <House size={32} strokeWidth={1.900} className="ml-[65px]" />
        <span className="ml-10 grid size-9 place-items-center rounded-[8px] bg-black"><span className="size-5 rounded-[4px] border-2 border-[#9a83d8]" /></span>
        <span className="ml-[14px] w-[232px] tracking-[-0.038em]">ProductTrackerPro</span>
        <svg viewBox="0 0 28 28" className="ml-[43px] size-7" fill="none" stroke="#e8ebf0" strokeWidth="2.400"><rect x="1.500" y="1.500" width="25" height="25" rx="4" /><path d="M6 9h3M12 9h10M6 15h3" /></svg>
        <div className="ml-[999px] flex h-16 w-[188px] shrink-0 items-center overflow-hidden rounded-[10px] bg-[#4e39bf]">
          <span className="grid h-16 w-[52px] place-items-center bg-[#271f5c]">
            <svg viewBox="0 0 34 30" className="h-[30px] w-[34px]" fill="#8f7cf0"><circle cx="6" cy="6" r="5" /><circle cx="17" cy="6" r="5" /><circle cx="28" cy="6" r="5" /><circle cx="12" cy="16" r="5" /><circle cx="23" cy="16" r="5" /></svg>
          </span>
          <span className="ml-[18px] font-semibold tracking-[-0.048em]">Running</span>
        </div>
        <Search size={32} strokeWidth={1.900} className="ml-auto" />
        <span className="ml-[29px] flex h-16 w-[156px] items-center rounded-[10px] bg-[#1c2333] pl-[18px]"><UserPlus size={30} strokeWidth={1.900} /><span className="ml-4 tracking-[-0.017em]">Invite</span></span>
        <span className="ml-3 flex h-16 w-[172px] items-center rounded-[10px] bg-[#1c2333] pl-[18px]"><Globe size={30} strokeWidth={1.900} /><span className="ml-[19px] tracking-[-0.036em]">Deploy</span></span>
        <span className="relative ml-5 grid size-12 place-items-center rounded-full border-2 border-[#3c4354] bg-[#2b3245] text-[20px] text-[#8b93a5]">
          TF
          <span className="absolute top-[26px] -left-[9px] grid size-6 place-items-center rounded-full bg-[#4c2a12]"><svg viewBox="0 0 16 16" className="size-4" fill="#ee6a2c"><path d="m8 0 2 6 6 2-6 2-2 6-2-6-6-2 6-2Z" /></svg></span>
        </span>
        <ChevronDown size={22} strokeWidth={2} className="mr-[31px] ml-[6px] text-[#9da3b0]" />
      </div>
      <div className="flex min-h-0 flex-1 pb-4">
        <div className="ml-[94px] flex w-[1333px] items-end rounded-[16px] bg-[#141822] pb-4 pl-4"><div className="h-16 w-[1300px] rounded-b-[14px] border-2 border-[#2b3245] bg-[#1c2130]" /></div>
        <div className="mr-[15px] ml-3 flex-1 rounded-[16px] bg-[#1c2333]">
          <div className="flex h-[64px] items-center justify-end border-b-2 border-[#2b3245] pr-[29px]">
            <svg viewBox="0 0 6 26" className="h-[26px] w-[6px]" fill="#b3b9c4"><circle cx="3" cy="3" r="2.500" /><circle cx="3" cy="13" r="2.500" /><circle cx="3" cy="23" r="2.500" /></svg>
          </div>
          <div className="flex h-[72px] items-center justify-end gap-6 border-b-2 border-[#2b3245] pr-[18px] text-[#a9afbb]">
            <span className="flex h-12 w-[340px] items-center justify-end rounded-[10px] bg-[#2b3245] pr-4">
              <svg viewBox="0 0 18 18" className="size-[18px]" fill="none" stroke="currentColor" strokeWidth="2"><path d="M0 9h16M9 1.500 16.500 9 9 16.500" /></svg>
            </span>
            <Monitor size={30} strokeWidth={1.800} className="-ml-1.5" /><Wrench size={29} strokeWidth={1.800} /><SquareArrowOutUpRight size={28} strokeWidth={1.800} />
          </div>
        </div>
      </div>
      <span className="absolute bottom-8 left-[44px] size-[5px] rounded-full bg-[#cfd3da]" />
    </div>
  );
}

/* ---------- dock ---------- */

function Tile({ children, className = '' }: Kids) {
  return <span className={`relative grid size-12 place-items-center overflow-hidden rounded-[11px] ${className}`}>{children}</span>;
}
const Badge = ({ children, className = 'w-6' }: Kids) => (
  <span className={`absolute -top-[7px] left-8 grid h-6 place-items-center rounded-full bg-[#e04a3c] font-['Inter'] text-[15px] leading-5 text-white ${className}`}>{children}</span>
);
function Spark() {
  return (
    <Tile className="bg-linear-to-b from-[#5cc8f6] to-[#2b6fe0]">
      <Pic vb="0 0 48 48" className="size-12"><path d="M48 34C40 36 32 42 28 48h20Z" fill="#f6c83c" /><path d="M48 39c-6 1-11 5-14 9" stroke="#2f62d8" strokeWidth="2.500" /><path d="m23 5 12 34-10-5-2 7-3-7-12 5Z" fill="#fff" /><path d="m23 5 2 29-2 7Z" fill="#cfdbe6" /></Pic>
    </Tile>
  );
}
function Calendar() {
  return (
    <Tile className="bg-[#f5f4f3]">
      <span className="absolute inset-x-0 top-0 h-[15px] bg-[#dc4c44] text-center font-['Inter'] text-[11px] leading-[15px] font-semibold text-white">JUL</span>
      <span className="mt-2 font-['Inter'] text-[29px] leading-9 font-light text-[#222]">4</span>
    </Tile>
  );
}
const launch = ['bg-[#7ee067]', 'bg-[#f3b83f]', 'bg-[#e5833a]', 'bg-[#d94233]', 'bg-[#a9b0b8]', 'bg-[#e2536b]', 'bg-[#9a47cf]', 'bg-[#3a8af0]', 'bg-[#6fcfb5]'];
const petals = ['#f0a33a', '#e6cf45', '#a9c94c', '#5cb596', '#6d9fd4', '#8d78c4', '#c46aa0', '#e36a52'];

const dock: [ReactNode, boolean][] = [
  [<Tile className="bg-[#e9edf3]"><Pic vb="0 0 48 48" className="size-12"><path d="M0 0h27c-5 9-7 17-7 27h6c0 8 1 14 3 21H0Z" fill="#3f97ec" /><path d="M13 13v5M35 13v5M8 31c9 10 23 10 32 0" stroke="#16233a" strokeWidth="2.300" strokeLinecap="round" /><path d="M27 0c-5 9-7 17-7 27h6c0 8 1 14 3 21" stroke="#16233a" strokeWidth="1" /></Pic></Tile>, true],
  [<Tile className="bg-[#c3c3c6]"><span className="grid grid-cols-3 gap-[2px]">{launch.map((c) => <span key={c} className={`size-[10px] rounded-[3px] ${c}`} />)}</span></Tile>, false],
  [<Tile className="bg-[#f7f6f5]"><Pic vb="0 0 48 48" className="size-12"><path d="M24 24 6.700 14A20 20 0 0 1 41.300 14Z" fill="#d94a3c" /><path d="M24 24V14h17.300A20 20 0 0 1 24 44Z" fill="#f3c13e" /><path d="M24 24 6.700 14A20 20 0 0 0 24 44l8.600-15Z" fill="#4fa552" /><path d="M6.700 14h34.600L24 24Z" fill="#d94a3c" /><circle cx="24" cy="24" r="10" fill="#fff" /><circle cx="24" cy="24" r="7.800" fill="#3f78e4" /></Pic></Tile>, true],
  [<Tile className="bg-linear-to-b from-[#737cf0] to-[#5660e2] text-white"><FaDiscord size={34} /></Tile>, false],
  [<Tile className="bg-linear-to-b from-[#7be37b] to-[#45b94b] text-white"><FaWhatsapp size={38} /></Tile>, true],
  [<Tile className="bg-linear-to-b from-[#84e66c] to-[#4ebf40]"><Pic vb="0 0 48 48" className="size-12"><path d="M12 39v-6M20 39V25M28.500 39V10M37 39V18" stroke="#fff" strokeWidth="5" strokeLinecap="round" /></Pic></Tile>, true],
  [<Tile className="bg-linear-to-b from-[#7fe37d] to-[#4bba4c]"><Pic vb="0 0 48 48" className="size-12"><path d="M24 8c10 0 18 6 18 14.500S34 37 24 37c-2 0-4 0-5.500-.7-2 2-4 2.700-7 2.700 2-2 2.600-3.500 2.500-5C9 31.300 6 27.500 6 22.500 6 14 14 8 24 8Z" fill="#f3f8f3" /></Pic></Tile>, true],
  [<Spark />, true],
  [<Tile className="bg-[#edf1f8] text-black"><RiOpenaiFill size={38} /></Tile>, true],
  [<Tile className="bg-[#cf7454]"><Pic vb="0 0 48 48" className="size-12"><path d="M24 24V7M24 24l8-15M24 24l14-11M24 24l17-3M24 24l16 7M24 24l10 13M24 24l2 17M24 24l-7 15M24 24 10 34M24 24 7 26M24 24 9 15M24 24 15 9" stroke="#fbf3ee" strokeWidth="3" strokeLinecap="round" /></Pic></Tile>, true],
  [<Tile className="bg-white"><Pic vb="0 0 48 48" className="size-12"><rect x="12" y="8" width="28" height="32" rx="2" fill="#2f9a5f" /><path d="M26 8h14v10H26Z" fill="#5cc58c" /><path d="M12 28h28v12H12Z" fill="#1f6a41" /><rect x="4" y="15" width="19" height="18" rx="2" fill="#1b7a45" /><path d="m9.500 19 8 10m0-10-8 10" stroke="#fff" strokeWidth="2.200" /></Pic></Tile>, false],
  [<Tile className="bg-linear-to-b from-[#f3ae46] to-[#ec8a35]"><Pic vb="0 0 48 48" className="size-12"><path d="M12 38 34 10l3 2L17 36Z" fill="#fff" stroke="#fff" /><path d="M10 41h30" stroke="#f9d9ae" strokeWidth="2" /></Pic></Tile>, false],
  [<Tile className="bg-white"><Pic vb="0 0 48 48" className="size-12"><rect x="12" y="8" width="28" height="32" rx="2" fill="#2f78d0" /><path d="M12 8h28v8H12Z" fill="#58a4ea" /><path d="M12 31h28v9H12Z" fill="#173f8c" /><rect x="4" y="15" width="19" height="18" rx="2" fill="#1c55b0" /><path d="m7.500 19 3 10 3-9 3 9 3-10" stroke="#fff" strokeWidth="2" /></Pic></Tile>, true],
  [<Tile className="border-2 border-[#9aa1ab] bg-[#1d1e20]"><Pic vb="0 0 48 48" className="size-12"><circle cx="24" cy="21" r="17" fill="#9fb0c4" /><path d="M24 21 12 9a17 17 0 0 1 8-4.500ZM24 21l12 12a17 17 0 0 1-8 4.500ZM24 21 41 17v8Z" fill="#e5ebf3" /><circle cx="24" cy="21" r="4" fill="#5d6b80" /><path d="M18 42h12" stroke="#ccc" strokeWidth="2.500" /></Pic></Tile>, false],
  [<Tile className="bg-black"><Pic vb="0 0 48 48" className="size-12"><rect x="6.500" y="12.500" width="35" height="22" stroke="#e8e8e8" strokeWidth="1.800" /><path d="M21 34h6v3h-6ZM16 37h16" stroke="#fff" strokeWidth="1.800" /></Pic></Tile>, false],
  [<Tile className="bg-linear-to-b from-[#3578e8] to-[#56bbf6]"><Pic vb="0 0 48 48" className="size-12"><rect x="8" y="13" width="33" height="22" rx="2" fill="#f2f2f1" /><path d="m9 15 15.500 13L40 15M9 34l11-9M40 34l-11-9" stroke="#b3b5b8" strokeWidth="1.500" /></Pic></Tile>, false],
  [<><Spark /><Badge className="ml-[-12px] w-[34px] text-[14px] tracking-[-0.04em]">5865</Badge></>, true],
  [<Tile className="bg-[#2e2f33]"><Pic vb="0 0 48 48" className="size-12"><path d="M0 0h48v16H0Z" fill="#e8e9ec" /><path d="m4 0 8 16M16 0l8 16M28 0l8 16M40 0l8 16" stroke="#2c2d31" strokeWidth="5" /><path d="M4 20h40v24H4Z" fill="#58c0d8" /><path d="M4 20h20v12L4 42Z" fill="#e9e04a" /><path d="M24 20h20v12H24Z" fill="#ee5c9c" /><path d="m24 32-20 12h20Z" fill="#72d36a" /><path d="m24 32 20 12V32Z" fill="#a56fe0" /></Pic></Tile>, false],
  [<Tile className="bg-[#eef0f2]"><Pic vb="0 0 48 48" className="size-12"><circle cx="24" cy="24" r="20.500" fill="#3f90e8" /><circle cx="24" cy="24" r="18" stroke="#a4cdf5" strokeWidth="2" strokeDasharray="1 2.500" /><path d="m38 10-11.500 16.500-5-5Z" fill="#e8492f" /><path d="m10 38 11.500-16.500 5 5Z" fill="#f2f2f2" /></Pic></Tile>, false],
  [<Tile className="bg-linear-to-b from-[#b45fe2] to-[#7a32bd]"><Pic vb="0 0 48 48" className="size-12"><circle cx="24" cy="22" r="16" stroke="#fff" strokeWidth="2.300" /><circle cx="24" cy="22" r="10" stroke="#fff" strokeWidth="2.300" /><circle cx="24" cy="22" r="4.500" fill="#fff" /><path d="M20 28h8l-1.500 14h-5Z" fill="#fff" stroke="#8f44c9" strokeWidth="1" /></Pic></Tile>, false],
  [<Tile className="bg-black font-['Inter'] text-[22px] leading-7 font-extrabold tracking-[-0.04em] text-white">TR</Tile>, false],
  [<span className="grid size-[59px] shrink-0 place-items-center rounded-[8px] bg-radial from-[#8a1a9c] to-[#1c0433]"><Pic vb="0 0 48 48" className="size-[54px]"><path d="M34 6c2 6 4 10 0 17 1 5-5 9-8 10-3 4-7 5-11 9 1-5-4-7-2-12 0-4 1-7 3-9 1 2 2 2 3 1-1-5 3-8 7-9 4-2 6-4 8-7Z" fill="#ee5a4a" /><path d="M33 12c1 7-7 11-9 16-3 4-6 6-8 11" stroke="#f9b44a" strokeWidth="4" /><path d="M28 16l-3 9M20 22l-2 8" stroke="#fbe3a0" strokeWidth="2" /></Pic></span>, false],
  [<Tile className="bg-white"><Pic vb="0 0 48 48" className="size-12">{petals.map((c, i) => <rect key={c} x="18.500" y="3.500" width="11" height="19" rx="5.500" fill={c} fillOpacity="0.850" transform={`rotate(${i * 45} 24 24)`} />)}</Pic></Tile>, true],
  [<Tile className="bg-linear-to-b from-[#f4cf4b] from-25% to-[#efeeea] to-25%"><Pic vb="0 0 48 48" className="size-12"><path d="M0 23h48M0 33h48" stroke="#d8d6d0" strokeWidth="1.200" /></Pic></Tile>, true],
  [<><Tile className="bg-linear-to-b from-[#7ce07a] to-[#4dba4d]"><Pic vb="0 0 48 48" className="size-12"><rect x="7" y="14" width="23" height="21" rx="5" fill="#f0f6f0" /><path d="m32 22 9-6v17l-9-6Z" fill="#f0f6f0" /></Pic></Tile><Badge>6</Badge></>, false],
  [<><Calendar /><Badge>11</Badge></>, true],
  [<Tile className="bg-[#7dd07a]"><Pic vb="0 0 48 48" className="size-12"><path d="M0 0h16l-4 30H0Z" fill="#e6edf2" /><path d="M14 0h12v48H14Z" fill="#3d7cf0" /><path d="M26 14l22 18v16H26Z" fill="#5fc36b" /><path d="m24 0 24 28" stroke="#fff" strokeWidth="7" /><path d="M30 0c1 8 10 14 18 14V0Z" fill="#bfc8cd" /><path d="M0 28h12l6 20H0Z" fill="#df7bbd" /><path d="M26 42h14v6H26Z" fill="#f6cf45" /><circle cx="19" cy="30" r="11" fill="#3a74ee" stroke="#fff" strokeWidth="2" /><path d="m19 22 5 14-5-3-5 3Z" fill="#fff" /></Pic></Tile>, false],
  [<><Calendar /><Badge>12</Badge></>, true],
  [<Tile className="rounded-full bg-[#4fb649]"><Pic vb="0 0 48 48" className="size-12"><path d="M17 10.500A14.500 14.500 0 1 0 38 20l-8-10" stroke="#fff" strokeWidth="6" /><circle cx="24" cy="25" r="5" fill="#b9e6b2" /></Pic></Tile>, false],
  [<><Tile className="bg-[#f8f8f8]"><Pic vb="0 0 48 48" className="size-12"><circle cx="9" cy="12" r="4" fill="#3a7bf0" /><circle cx="9" cy="24" r="4" fill="#e0473a" /><circle cx="9" cy="36" r="4" fill="#ee9433" /><path d="M18 12h26M18 24h26M18 36h26" stroke="#cfcfcf" strokeWidth="1.800" /></Pic></Tile><Badge>2</Badge></>, false],
  [<Tile className="bg-linear-to-b from-[#2c3a38] to-[#0e1416] text-white"><span className="flex items-center font-['Inter'] text-[20px] leading-6 font-medium tracking-tight"><FaApple size={17} />tv</span></Tile>, false],
  [<Tile className="bg-linear-to-b from-[#4ab1f4] to-[#2460e0]"><Pic vb="0 0 48 48" className="size-12"><path d="M27 9 14 33M21 9l14 26M8 30h20M33 30h7M13 35l-2 4" stroke="#fff" strokeWidth="4" strokeLinecap="round" /></Pic></Tile>, false],
  [<Pic vb="0 0 52 56" className="h-14 w-[52px]"><path d="M26 0 51 14v28L26 56 1 42V14Z" fill="#000" /><path d="m26 8 16 9-6 10-6-3-3 2v20L11 37V17Z" fill="#dd532b" /></Pic>, false],
  [<Tile className="bg-[#fafafa]"><Pic vb="0 0 48 48" className="size-12"><rect x="18" y="6" width="24" height="24" rx="3" fill="#6cc3ee" /><circle cx="20" cy="30" r="13" fill="#ee7d5c" /><path d="M8 28c4-8 9-14 10-9s-3 12 0 11 6-12 9-11-3 12 1 11 6-10 9-10" stroke="#14375c" strokeWidth="3" /></Pic></Tile>, false],
  [<><Tile className="bg-linear-to-b from-[#cfd9de] to-[#8e8f91]"><Pic vb="0 0 48 48" className="size-12"><circle cx="24" cy="24" r="18" stroke="#3a3c3f" strokeWidth="5" strokeDasharray="2.500 1" /><circle cx="24" cy="24" r="13" stroke="#3a3c3f" strokeWidth="3" /><path d="M24 24h14M24 24l-7-12M24 24l-7 12" stroke="#3a3c3f" strokeWidth="3" /><circle cx="24" cy="24" r="4" fill="#3a3c3f" /></Pic></Tile><Badge>1</Badge></>, true],
  [<Pic vb="0 0 54 54" className="size-[54px]"><path d="m2 13 48-12 2 1v51L6 49q-3 0-3-4Z" fill="#b5a877" /><path d="m2 13 48-12v51L6 49Z" stroke="#8d824f" strokeWidth="1" /><path d="M21 18h14v26H21Z" fill="#3b3a35" /><path d="M24 20h9v20h-9Z" fill="#efefec" /><path d="M24 30h9v10h-9Z" fill="#77766f" /></Pic>, false],
  [<Tile className="bg-linear-to-b from-[#ee5f72] to-[#e13a44]"><Pic vb="0 0 48 48" className="size-12"><path d="M18 36V14l17-4v22" stroke="#fff" strokeWidth="3" /><path d="M17 12.500 36 8v6l-19 4.500Z" fill="#fff" /><ellipse cx="14.500" cy="36" rx="5" ry="4" fill="#fff" /><ellipse cx="31.500" cy="32" rx="5" ry="4" fill="#fff" /></Pic></Tile>, false],
  [<Tile className="bg-linear-to-b from-[#c46fe4] to-[#8e43c8]"><Pic vb="0 0 48 48" className="size-12"><path d="M14 12h20q4 0 4 4v14q0 4-4 4H23l-6 5v-5h-3q-4 0-4-4V16q0-4 4-4Z" fill="#fff" /><path d="M24 15v9M24 27v4" stroke="#9a50d0" strokeWidth="3.500" /></Pic></Tile>, false],
  [<Tile className="bg-white text-[#2e6bf5]"><FaFacebookMessenger size={40} /></Tile>, false],
  [<Tile className="bg-[#bdbdbf]"><Pic vb="0 0 48 48" className="size-12"><rect x="14" y="3" width="20" height="42" rx="4" fill="#17262f" /><path d="M16 6h16L16 26Z" fill="#e58b78" /><path d="M32 6v36H16V26Z" fill="#3f6f80" /></Pic></Tile>, false],
  [<Tile className="bg-[#3e63ee]"><Pic vb="0 0 48 48" className="size-12"><path d="m12 6 30 8-7 28-30-8Z" fill="#fff" /><path d="m20 18 9 2.300-2.300 9-9-2.300Z" fill="#3e63ee" /></Pic></Tile>, false],
];

const dockRight: ReactNode[] = [
  <Tile className="overflow-visible bg-[#f7f6f4]"><Pic vb="0 0 48 48" className="size-12 overflow-visible"><path d="M0 10h48M0 17h48M0 24h48M0 31h48M0 38h48" stroke="#c7ccd2" strokeWidth="1" /><path d="M9 0v48" stroke="#e7a9a4" strokeWidth="1" /><path d="m46-4-24 54" stroke="#5f6c78" strokeWidth="4.500" /><path d="m45-3-23 50" stroke="#b8c4cf" strokeWidth="1.500" /></Pic></Tile>,
  <Tile className="bg-[#2563e8] font-['Inter'] text-[16px] leading-5 font-medium tracking-[-0.04em] text-white">zoom</Tile>,
  <Tile className="bg-linear-to-b from-[#3f96f4] to-[#2462d8]"><span className="grid size-11 place-items-center rounded-full border-2 border-[#a5cbf6]"><span className="grid size-[34px] place-items-center rounded-full border-[3px] border-[#c5ddf8] bg-[#3c7ee2]"><span className="h-[19px] w-[6px] rounded-full bg-[#dbe9fb]" /></span></span></Tile>,
  <Pic vb="0 0 56 56" className="size-14 overflow-visible"><path d="M14 4c14-8 34 0 34 12l-30 4Z" fill="#79708c" fillOpacity="0.700" /><path d="m3 14 33-9 12 42-34 9Z" fill="#eeedec" /><text x="13" y="39" fontFamily="DejaVu Sans" fontSize="24" fill="#555" transform="rotate(-12 26 30)">⌘</text><path d="M53 10 32 52" stroke="#15151c" strokeWidth="5" strokeLinecap="round" /><path d="m34 46-3 8" stroke="#e8e8ee" strokeWidth="5" strokeLinecap="round" /></Pic>,
  <Tile className="border-[3px] border-[#b9c0c2] bg-[#161616]"><Pic vb="0 0 48 48" className="size-12"><path d="m9 12 4 4-4 4M16 19h7" stroke="#fff" strokeWidth="2" /></Pic></Tile>,
  <Tile className="bg-[#171d2a]"><Pic vb="0 0 48 48" className="size-12"><path d="M13 9h12v10H13ZM25 19h12v10H25ZM13 29h12v10H13Z" fill="#ea6326" /></Pic></Tile>,
  <Acrobat className="size-12 rounded-[11px]" />,
  <Tile className="bg-[#4daa4e]"><Pic vb="0 0 48 48" className="size-12"><path d="M13 10h10v28H13ZM25 10h10v28H25Z" fill="#fff" /><path d="m12 19 12 7M36 21 24 31" stroke="#4daa4e" strokeWidth="2.500" /></Pic></Tile>,
  <span className="relative"><Tile className="border-[3px] border-[#f3f3f1] bg-linear-to-b from-[#7da4e0] from-50% via-[#2f5d96] via-60% to-[#d8cbb6]" /><svg viewBox="0 0 24 28" className="absolute -right-1 -bottom-1 h-7 w-6"><path d="M3 0h18v8H3Z" fill="#111" /><path d="M4 10h16l3 17H1Z" fill="#b9c1cb" /><path d="M8 13h8v9H8Z" fill="#59606a" /></svg></span>,
];

function DockItem({ icon, dot, className }: { icon: ReactNode; dot: boolean; className: string }) {
  return (
    <div className={`relative grid h-[78px] shrink-0 place-items-center pb-1 ${className}`}>
      <span className="relative grid min-h-12 min-w-12 place-items-center">{icon}</span>
      {dot && <span className="absolute bottom-[2px] left-1/2 size-[6px] -translate-x-1/2 rounded-full bg-black" />}
    </div>
  );
}

function Dock() {
  return (
    <div className="absolute top-[2142px] left-[47px] flex h-[82px] w-[3362px] rounded-[26px] border-2 border-[#7b7b7d] bg-[#565658] pl-[3px]">
      {dock.map(([icon, dot], i) => <DockItem key={i} icon={icon} dot={dot} className="w-[64.6px]" />)}
      <span className="mt-3 ml-[12px] h-[58px] w-[2px] bg-[#2c2c2e]" />
      <span className="mt-[35px] ml-[11px] h-[5px] w-[4px] bg-[#d5e2f5]" />
      {dockRight.map((icon, i) => <DockItem key={i} icon={icon} dot className="w-[64.75px]" />)}
      <span className="mt-3 ml-[14px] h-[58px] w-[2px] bg-[#2c2c2e]" />
      <div className="ml-[22px] grid h-[78px] place-items-center">
        <Pic vb="0 0 44 56" className="h-14 w-11"><path d="M2 8h40l-6 44q-1 3-4 3H12q-3 0-4-3Z" fill="#d9dadb" /><path d="M4 9 9 2l7 3 7-4 6 4 7-3 5 7-18 6Z" fill="#f2f2f2" stroke="#55585e" strokeWidth="1.500" /><path d="m11 6 5 6 5-7 6 6 6-5" stroke="#3f6d8c" strokeWidth="2" /><path d="m10 18 3 34M20 18l1 35M33 18l-4 34" stroke="#c3c4c6" strokeWidth="2" /></Pic>
      </div>
    </div>
  );
}

/* ---------- page ---------- */

export default function App() {
  return (
    <div className="relative h-[2234px] w-[3456px] overflow-hidden bg-black">
      <div className="absolute top-[2136px] left-[176px] h-[3px] w-[2800px] bg-[#26272c]" />
      <EditorWindow />
      <div className="absolute top-[108px] left-0 flex h-[1986px] w-[3228px] flex-col overflow-hidden rounded-[22px] bg-white shadow-[0_10px_60px_rgba(0,0,0,0.600)]">
        <TabStrip />
        <Toolbar />
        <Bookmarks />
        <div className="flex min-h-0 flex-1">
          <div className="flex min-w-0 flex-1 flex-col">
            <AppHeader />
            <div className="flex min-h-0 flex-1"><Sidebar /><Content /></div>
          </div>
          <div className="w-[30px] shrink-0 border-l-2 border-[#e8e8e8] bg-[#fafafa] pl-[6px]">
            <div className="mt-[134px] h-[1302px] w-4 rounded-full bg-[#c1c1c1]" />
          </div>
        </div>
        <div className="pointer-events-none absolute inset-x-0 bottom-0 h-14 bg-linear-to-b from-transparent to-black/5" />
      </div>
      <Dock />
    </div>
  );
}
